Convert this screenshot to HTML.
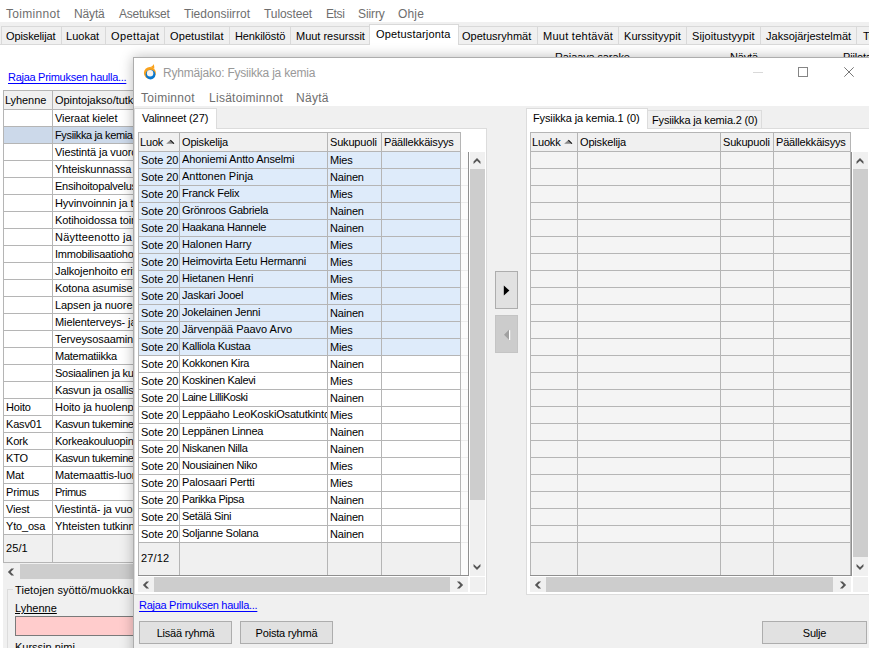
<!DOCTYPE html>
<html lang="fi"><head><meta charset="utf-8"><title>Ryhmäjako</title><style>
html,body{margin:0;padding:0;}
body{width:869px;height:648px;overflow:hidden;position:relative;background:#fff;font-family:"Liberation Sans",sans-serif;font-size:11px;color:#000;}
*{box-sizing:border-box;}
.a{position:absolute;white-space:nowrap;}
.t{position:absolute;white-space:nowrap;line-height:13px;height:13px;letter-spacing:-0.18px;}
.m{position:absolute;white-space:nowrap;font-size:12px;line-height:14px;color:#6e6e6e;letter-spacing:0.27px;}
.lnk{position:absolute;white-space:nowrap;color:#0000ff;text-decoration:underline;text-underline-offset:1.5px;font-size:11px;line-height:13px;letter-spacing:-0.28px;}
.btn{position:absolute;background:#e1e1e1;border:1px solid #adadad;text-align:center;font-size:11px;letter-spacing:-0.2px;}
</style></head><body>
<div class="m" style="left:6px;top:7px;letter-spacing:0.316px;">Toiminnot</div>
<div class="m" style="left:74px;top:7px;letter-spacing:-0.152px;">Näytä</div>
<div class="m" style="left:119px;top:7px;letter-spacing:-0.234px;">Asetukset</div>
<div class="m" style="left:184px;top:7px;letter-spacing:0.032px;">Tiedonsiirrot</div>
<div class="m" style="left:264px;top:7px;letter-spacing:-0.091px;">Tulosteet</div>
<div class="m" style="left:326px;top:7px;letter-spacing:-0.404px;">Etsi</div>
<div class="m" style="left:358px;top:7px;letter-spacing:-0.105px;">Siirry</div>
<div class="m" style="left:398px;top:7px;letter-spacing:0.16px;">Ohje</div>
<div class="a" style="left:0px;top:22px;width:869px;height:22px;background:#f0f0f0;"></div>
<div class="a" style="left:0px;top:44px;width:869px;height:1px;background:#d9d9d9;"></div>
<div class="a" style="left:1px;top:26px;width:61px;height:18px;border:1px solid #d9d9d9;border-bottom:none;"></div>
<div class="t" style="left:6px;top:30px;letter-spacing:-0.123px;">Opiskelijat</div>
<div class="a" style="left:61px;top:26px;width:45px;height:18px;border:1px solid #d9d9d9;border-bottom:none;border-left:none;"></div>
<div class="t" style="left:66px;top:30px;letter-spacing:0.011px;">Luokat</div>
<div class="a" style="left:105px;top:26px;width:60px;height:18px;border:1px solid #d9d9d9;border-bottom:none;border-left:none;"></div>
<div class="t" style="left:111px;top:30px;letter-spacing:0.44px;">Opettajat</div>
<div class="a" style="left:164px;top:26px;width:66px;height:18px;border:1px solid #d9d9d9;border-bottom:none;border-left:none;"></div>
<div class="t" style="left:170px;top:30px;letter-spacing:0.101px;">Opetustilat</div>
<div class="a" style="left:229px;top:26px;width:62px;height:18px;border:1px solid #d9d9d9;border-bottom:none;border-left:none;"></div>
<div class="t" style="left:235px;top:30px;letter-spacing:-0.116px;">Henkilöstö</div>
<div class="a" style="left:290px;top:26px;width:80px;height:18px;border:1px solid #d9d9d9;border-bottom:none;border-left:none;"></div>
<div class="t" style="left:296px;top:30px;letter-spacing:-0.013px;">Muut resurssit</div>
<div class="a" style="left:369px;top:24px;width:90px;height:21px;background:#fff;border:1px solid #d9d9d9;border-bottom:none;"></div>
<div class="t" style="left:376px;top:28px;letter-spacing:0.167px;">Opetustarjonta</div>
<div class="a" style="left:458px;top:26px;width:80px;height:18px;border:1px solid #d9d9d9;border-bottom:none;border-left:none;"></div>
<div class="t" style="left:462px;top:30px;letter-spacing:0.017px;">Opetusryhmät</div>
<div class="a" style="left:537px;top:26px;width:82px;height:18px;border:1px solid #d9d9d9;border-bottom:none;border-left:none;"></div>
<div class="t" style="left:543px;top:30px;letter-spacing:0.265px;">Muut tehtävät</div>
<div class="a" style="left:618px;top:26px;width:69px;height:18px;border:1px solid #d9d9d9;border-bottom:none;border-left:none;"></div>
<div class="t" style="left:624px;top:30px;letter-spacing:0.046px;">Kurssityypit</div>
<div class="a" style="left:686px;top:26px;width:75px;height:18px;border:1px solid #d9d9d9;border-bottom:none;border-left:none;"></div>
<div class="t" style="left:692px;top:30px;letter-spacing:0.104px;">Sijoitustyypit</div>
<div class="a" style="left:760px;top:26px;width:97px;height:18px;border:1px solid #d9d9d9;border-bottom:none;border-left:none;"></div>
<div class="t" style="left:766px;top:30px;letter-spacing:0.007px;">Jaksojärjestelmät</div>
<div class="a" style="left:856px;top:26px;width:45px;height:18px;border:1px solid #d9d9d9;border-bottom:none;border-left:none;"></div>
<div class="t" style="left:863px;top:30px;letter-spacing:-0.819px;">Tu</div>
<div class="t" style="left:555px;top:51px;letter-spacing:-0.117px;">Rajaava sarake</div>
<div class="t" style="left:730px;top:51px;">Näytä</div>
<div class="t" style="left:843px;top:51px;">Piilota</div>
<div class="lnk" style="left:8px;top:71px;">Rajaa Primuksen haulla...</div>
<div class="a" style="left:3px;top:90px;width:400px;height:473px;background:#fff;border:1px solid #b5b5b5;"></div>
<div class="a" style="left:4px;top:91px;width:400px;height:18px;background:#f0f0f0;"></div>
<div class="a" style="left:3px;top:109px;width:400px;height:1px;background:#b5b5b5;"></div>
<div class="t" style="left:5px;top:94px;letter-spacing:-0.087px;">Lyhenne</div>
<div class="t" style="left:55px;top:94px;letter-spacing:-0.04px;">Opintojakso/tutkinnon osa</div>
<div class="a" style="left:3px;top:126px;width:400px;height:1px;background:#b5b5b5;"></div>
<div class="t" style="left:55px;top:112px;letter-spacing:-0.071px;">Vieraat kielet</div>
<div class="a" style="left:4px;top:127px;width:400px;height:16px;background:#ccd9ea;"></div>
<div class="a" style="left:3px;top:143px;width:400px;height:1px;background:#b5b5b5;"></div>
<div class="t" style="left:55px;top:129px;letter-spacing:-0.362px;">Fysiikka ja kemia</div>
<div class="a" style="left:3px;top:160px;width:400px;height:1px;background:#b5b5b5;"></div>
<div class="t" style="left:55px;top:146px;letter-spacing:-0.1px;">Viestintä ja vuorovaikutus</div>
<div class="a" style="left:3px;top:177px;width:400px;height:1px;background:#b5b5b5;"></div>
<div class="t" style="left:55px;top:163px;letter-spacing:-0.1px;">Yhteiskunnassa ja</div>
<div class="a" style="left:3px;top:194px;width:400px;height:1px;background:#b5b5b5;"></div>
<div class="t" style="left:55px;top:180px;letter-spacing:-0.22px;">Ensihoitopalvelussa</div>
<div class="a" style="left:3px;top:211px;width:400px;height:1px;background:#b5b5b5;"></div>
<div class="t" style="left:55px;top:197px;letter-spacing:-0.1px;">Hyvinvoinnin ja toimintakyvyn</div>
<div class="a" style="left:3px;top:228px;width:400px;height:1px;background:#b5b5b5;"></div>
<div class="t" style="left:55px;top:214px;letter-spacing:-0.1px;">Kotihoidossa toimiminen</div>
<div class="a" style="left:3px;top:245px;width:400px;height:1px;background:#b5b5b5;"></div>
<div class="t" style="left:55px;top:231px;letter-spacing:0.2px;">Näytteenotto ja</div>
<div class="a" style="left:3px;top:262px;width:400px;height:1px;background:#b5b5b5;"></div>
<div class="t" style="left:55px;top:248px;letter-spacing:-0.247px;">Immobilisaatiohoidon</div>
<div class="a" style="left:3px;top:279px;width:400px;height:1px;background:#b5b5b5;"></div>
<div class="t" style="left:55px;top:265px;letter-spacing:-0.112px;">Jalkojenhoito erityisryhmille</div>
<div class="a" style="left:3px;top:296px;width:400px;height:1px;background:#b5b5b5;"></div>
<div class="t" style="left:55px;top:282px;letter-spacing:-0.1px;">Kotona asumisen tukeminen</div>
<div class="a" style="left:3px;top:313px;width:400px;height:1px;background:#b5b5b5;"></div>
<div class="t" style="left:55px;top:299px;letter-spacing:-0.1px;">Lapsen ja nuoren hoidon</div>
<div class="a" style="left:3px;top:330px;width:400px;height:1px;background:#b5b5b5;"></div>
<div class="t" style="left:55px;top:316px;letter-spacing:-0.1px;">Mielenterveys- ja päihdetyö</div>
<div class="a" style="left:3px;top:347px;width:400px;height:1px;background:#b5b5b5;"></div>
<div class="t" style="left:55px;top:333px;letter-spacing:-0.099px;">Terveysosaaminen</div>
<div class="a" style="left:3px;top:364px;width:400px;height:1px;background:#b5b5b5;"></div>
<div class="t" style="left:55px;top:350px;letter-spacing:-0.241px;">Matematiikka</div>
<div class="a" style="left:3px;top:381px;width:400px;height:1px;background:#b5b5b5;"></div>
<div class="t" style="left:55px;top:367px;letter-spacing:-0.269px;">Sosiaalinen ja kulttuurinen</div>
<div class="a" style="left:3px;top:398px;width:400px;height:1px;background:#b5b5b5;"></div>
<div class="t" style="left:55px;top:384px;letter-spacing:-0.196px;">Kasvun ja osallisuuden</div>
<div class="a" style="left:3px;top:415px;width:400px;height:1px;background:#b5b5b5;"></div>
<div class="t" style="left:6px;top:401px;">Hoito</div>
<div class="t" style="left:55px;top:401px;letter-spacing:-0.057px;">Hoito ja huolenpito</div>
<div class="a" style="left:3px;top:432px;width:400px;height:1px;background:#b5b5b5;"></div>
<div class="t" style="left:6px;top:418px;">Kasv01</div>
<div class="t" style="left:55px;top:418px;letter-spacing:-0.386px;">Kasvun tukeminen</div>
<div class="a" style="left:3px;top:449px;width:400px;height:1px;background:#b5b5b5;"></div>
<div class="t" style="left:6px;top:435px;">Kork</div>
<div class="t" style="left:55px;top:435px;letter-spacing:-0.224px;">Korkeakouluopinnot</div>
<div class="a" style="left:3px;top:466px;width:400px;height:1px;background:#b5b5b5;"></div>
<div class="t" style="left:6px;top:452px;">KTO</div>
<div class="t" style="left:55px;top:452px;letter-spacing:-0.386px;">Kasvun tukeminen ja</div>
<div class="a" style="left:3px;top:483px;width:400px;height:1px;background:#b5b5b5;"></div>
<div class="t" style="left:6px;top:469px;">Mat</div>
<div class="t" style="left:55px;top:469px;letter-spacing:-0.1px;">Matemaattis-luonnontieteellinen</div>
<div class="a" style="left:3px;top:500px;width:400px;height:1px;background:#b5b5b5;"></div>
<div class="t" style="left:6px;top:486px;">Primus</div>
<div class="t" style="left:55px;top:486px;letter-spacing:-0.522px;">Primus</div>
<div class="a" style="left:3px;top:517px;width:400px;height:1px;background:#b5b5b5;"></div>
<div class="t" style="left:6px;top:503px;">Viest</div>
<div class="t" style="left:55px;top:503px;letter-spacing:-0.028px;">Viestintä- ja vuorovaikutus</div>
<div class="a" style="left:3px;top:534px;width:400px;height:1px;background:#b5b5b5;"></div>
<div class="t" style="left:6px;top:520px;">Yto_osa</div>
<div class="t" style="left:55px;top:520px;letter-spacing:-0.1px;">Yhteisten tutkinnon osien</div>
<div class="a" style="left:4px;top:535px;width:400px;height:27px;background:#f0f0f0;"></div>
<div class="t" style="left:6px;top:542px;letter-spacing:0.095px;">25/1</div>
<div class="a" style="left:52px;top:90px;width:1px;height:473px;background:#b5b5b5;"></div>
<div class="a" style="left:3px;top:563px;width:400px;height:17px;background:#f0f0f0;"></div>
<div class="a" style="left:20px;top:564px;width:400px;height:15px;background:#cdcdcd;"></div>
<svg class="a" style="left:6px;top:566.5px" width="10" height="10" viewBox="0 0 10 10"><polygon points="1.90,5.00 5.40,8.45 8.10,8.45 4.70,5.00 8.10,1.55 5.40,1.55" fill="#565656"/></svg>
<div class="a" style="left:3px;top:580px;width:400px;height:70px;background:#f0f0f0;"></div>
<div class="a" style="left:7px;top:589px;width:400px;height:70px;border:1px solid #dcdcdc;"></div>
<div class="t" style="left:13px;top:584px;background:#f0f0f0;padding:0 2px;letter-spacing:0.07px;">Tietojen syöttö/muokkaus</div>
<div class="t" style="left:15px;top:602px;text-decoration:underline;letter-spacing:0;">Lyhenne</div>
<div class="a" style="left:15px;top:616px;width:400px;height:20px;background:#ffcccc;border:1px solid #7a7a7a;"></div>
<div class="t" style="left:15px;top:641px;letter-spacing:0;">Kurssin nimi</div>
<div class="a" style="left:133px;top:57px;width:760px;height:620px;background:#f0f0f0;border:1px solid #adadad;box-shadow:0 0 12px 0 rgba(0,0,0,0.27);"></div>
<div class="a" style="left:134px;top:58px;width:758px;height:48px;background:#fff;"></div>
<svg class="a" style="left:143px;top:63px" width="15" height="18" viewBox="0 0 15 18"><circle cx="6.9" cy="9.9" r="6" fill="#f9a11b"/><path d="M6.8 4 C8.8 3.7 10 2.7 10.7 1 C11.2 2.4 11.4 3.8 11.3 5.6 Z" fill="#f9a11b"/><circle cx="7.5" cy="11.6" r="4.9" fill="#0a78d0"/><circle cx="7.1" cy="10.2" r="3.2" fill="#f8f4ee"/></svg>
<div class="m" style="left:163px;top:66px;color:#999;letter-spacing:-0.21px;">Ryhmäjako: Fysiikka ja kemia</div>
<div class="a" style="left:753px;top:72px;width:10px;height:1px;background:#d9d9d9;"></div>
<div class="a" style="left:798px;top:67px;width:10px;height:10px;border:1px solid #858585;"></div>
<svg class="a" style="left:844px;top:67px" width="10" height="10" viewBox="0 0 10 10"><path d="M0.3 0.3 L9.7 9.7 M9.7 0.3 L0.3 9.7" stroke="#777" stroke-width="1" fill="none"/></svg>
<div class="m" style="left:141px;top:91px;">Toiminnot</div>
<div class="m" style="left:209px;top:91px;">Lisätoiminnot</div>
<div class="m" style="left:296px;top:91px;">Näytä</div>
<div class="a" style="left:134px;top:128px;width:353px;height:467px;background:#fff;border:1px solid #dcdcdc;"></div>
<div class="a" style="left:134px;top:108px;width:83px;height:21px;background:#fff;border:1px solid #dcdcdc;border-bottom:none;"></div>
<div class="t" style="left:142px;top:112px;letter-spacing:-0.105px;">Valinneet (27)</div>
<div class="a" style="left:138px;top:132px;width:323px;height:20px;background:#f0f0f0;border:1px solid #b5b5b5;"></div>
<div class="a" style="left:138px;top:152px;width:323px;height:391px;background:#fff;border-left:1px solid #b5b5b5;border-right:1px solid #b5b5b5;"></div>
<div class="a" style="left:139px;top:152px;width:321px;height:203px;background:#deebfa;"></div>
<div class="a" style="left:138px;top:543px;width:323px;height:32px;background:#f0f0f0;border-left:1px solid #b5b5b5;border-right:1px solid #b5b5b5;"></div>
<div class="a" style="left:138px;top:168px;width:323px;height:1px;background:#b5b5b5;"></div>
<div class="a" style="left:138px;top:185px;width:323px;height:1px;background:#b5b5b5;"></div>
<div class="a" style="left:138px;top:202px;width:323px;height:1px;background:#b5b5b5;"></div>
<div class="a" style="left:138px;top:219px;width:323px;height:1px;background:#b5b5b5;"></div>
<div class="a" style="left:138px;top:236px;width:323px;height:1px;background:#b5b5b5;"></div>
<div class="a" style="left:138px;top:253px;width:323px;height:1px;background:#b5b5b5;"></div>
<div class="a" style="left:138px;top:270px;width:323px;height:1px;background:#b5b5b5;"></div>
<div class="a" style="left:138px;top:287px;width:323px;height:1px;background:#b5b5b5;"></div>
<div class="a" style="left:138px;top:304px;width:323px;height:1px;background:#b5b5b5;"></div>
<div class="a" style="left:138px;top:321px;width:323px;height:1px;background:#b5b5b5;"></div>
<div class="a" style="left:138px;top:338px;width:323px;height:1px;background:#b5b5b5;"></div>
<div class="a" style="left:138px;top:355px;width:323px;height:1px;background:#b5b5b5;"></div>
<div class="a" style="left:138px;top:372px;width:323px;height:1px;background:#b5b5b5;"></div>
<div class="a" style="left:138px;top:389px;width:323px;height:1px;background:#b5b5b5;"></div>
<div class="a" style="left:138px;top:406px;width:323px;height:1px;background:#b5b5b5;"></div>
<div class="a" style="left:138px;top:423px;width:323px;height:1px;background:#b5b5b5;"></div>
<div class="a" style="left:138px;top:440px;width:323px;height:1px;background:#b5b5b5;"></div>
<div class="a" style="left:138px;top:457px;width:323px;height:1px;background:#b5b5b5;"></div>
<div class="a" style="left:138px;top:474px;width:323px;height:1px;background:#b5b5b5;"></div>
<div class="a" style="left:138px;top:491px;width:323px;height:1px;background:#b5b5b5;"></div>
<div class="a" style="left:138px;top:508px;width:323px;height:1px;background:#b5b5b5;"></div>
<div class="a" style="left:138px;top:525px;width:323px;height:1px;background:#b5b5b5;"></div>
<div class="a" style="left:138px;top:542px;width:323px;height:1px;background:#b5b5b5;"></div>
<div class="a" style="left:179px;top:132px;width:1px;height:443px;background:#b5b5b5;"></div>
<div class="a" style="left:327px;top:132px;width:1px;height:443px;background:#b5b5b5;"></div>
<div class="a" style="left:381px;top:132px;width:1px;height:443px;background:#b5b5b5;"></div>
<div class="a" style="left:460px;top:132px;width:1px;height:443px;background:#b5b5b5;"></div>
<div class="a" style="left:461px;top:152px;width:7px;height:423px;background:#fcfcfc;"></div>
<div class="a" style="left:461px;top:168px;width:7px;height:1px;background:#ececec;"></div>
<div class="a" style="left:461px;top:185px;width:7px;height:1px;background:#ececec;"></div>
<div class="a" style="left:461px;top:202px;width:7px;height:1px;background:#ececec;"></div>
<div class="a" style="left:461px;top:219px;width:7px;height:1px;background:#ececec;"></div>
<div class="a" style="left:461px;top:236px;width:7px;height:1px;background:#ececec;"></div>
<div class="a" style="left:461px;top:253px;width:7px;height:1px;background:#ececec;"></div>
<div class="a" style="left:461px;top:270px;width:7px;height:1px;background:#ececec;"></div>
<div class="a" style="left:461px;top:287px;width:7px;height:1px;background:#ececec;"></div>
<div class="a" style="left:461px;top:304px;width:7px;height:1px;background:#ececec;"></div>
<div class="a" style="left:461px;top:321px;width:7px;height:1px;background:#ececec;"></div>
<div class="a" style="left:461px;top:338px;width:7px;height:1px;background:#ececec;"></div>
<div class="a" style="left:461px;top:355px;width:7px;height:1px;background:#ececec;"></div>
<div class="a" style="left:461px;top:372px;width:7px;height:1px;background:#ececec;"></div>
<div class="a" style="left:461px;top:389px;width:7px;height:1px;background:#ececec;"></div>
<div class="a" style="left:461px;top:406px;width:7px;height:1px;background:#ececec;"></div>
<div class="a" style="left:461px;top:423px;width:7px;height:1px;background:#ececec;"></div>
<div class="a" style="left:461px;top:440px;width:7px;height:1px;background:#ececec;"></div>
<div class="a" style="left:461px;top:457px;width:7px;height:1px;background:#ececec;"></div>
<div class="a" style="left:461px;top:474px;width:7px;height:1px;background:#ececec;"></div>
<div class="a" style="left:461px;top:491px;width:7px;height:1px;background:#ececec;"></div>
<div class="a" style="left:461px;top:508px;width:7px;height:1px;background:#ececec;"></div>
<div class="a" style="left:461px;top:525px;width:7px;height:1px;background:#ececec;"></div>
<div class="a" style="left:461px;top:542px;width:7px;height:1px;background:#ececec;"></div>
<div class="a" style="left:138px;top:575px;width:331px;height:1px;background:#8f8f8f;"></div>
<div class="a" style="left:468px;top:152px;width:1px;height:424px;background:#8f8f8f;"></div>
<div class="a" style="left:469px;top:152px;width:17px;height:442px;background:#fff;"></div>
<div class="a" style="left:470px;top:152px;width:15px;height:424px;background:#f0f0f0;"></div>
<div class="a" style="left:470px;top:169px;width:15px;height:331px;background:#cdcdcd;"></div>
<svg class="a" style="left:472.2px;top:156px" width="10" height="10" viewBox="0 0 10 10"><polygon points="5.00,1.90 8.45,5.40 8.45,8.10 5.00,4.70 1.55,8.10 1.55,5.40" fill="#565656"/></svg>
<svg class="a" style="left:472.2px;top:562px" width="10" height="10" viewBox="0 0 10 10"><polygon points="5.00,8.10 8.45,4.60 8.45,1.90 5.00,5.30 1.55,1.90 1.55,4.60" fill="#565656"/></svg>
<div class="a" style="left:138px;top:576px;width:331px;height:18px;background:#fff;"></div>
<div class="a" style="left:138px;top:577px;width:330px;height:15px;background:#f0f0f0;"></div>
<div class="a" style="left:154px;top:577px;width:296px;height:15px;background:#cdcdcd;"></div>
<svg class="a" style="left:141px;top:579.5px" width="10" height="10" viewBox="0 0 10 10"><polygon points="1.90,5.00 5.40,8.45 8.10,8.45 4.70,5.00 8.10,1.55 5.40,1.55" fill="#565656"/></svg>
<svg class="a" style="left:455px;top:579.5px" width="10" height="10" viewBox="0 0 10 10"><polygon points="8.10,5.00 4.60,8.45 1.90,8.45 5.30,5.00 1.90,1.55 4.60,1.55" fill="#565656"/></svg>
<div class="a" style="left:470px;top:577px;width:15px;height:15px;background:#f0f0f0;"></div>
<div class="t" style="left:140px;top:136px;">Luok</div>
<svg class="a" style="left:166px;top:138px" width="11" height="7" viewBox="0 0 11 7"><path d="M0.2 5.8 L4.3 1.9 L8.3 5.8Z" fill="#868686"/><path d="M5.1 1.7 L8.9 5.3" stroke="#fff" stroke-width="0.9" fill="none"/><path d="M4.4 2.1 L8 5.6" stroke="#111" stroke-width="1.1" fill="none"/></svg>
<div class="t" style="left:182px;top:136px;">Opiskelija</div>
<div class="t" style="left:330px;top:136px;">Sukupuoli</div>
<div class="t" style="left:384px;top:136px;">Päällekkäisyys</div>
<div class="t" style="left:141px;top:154px;letter-spacing:-0.089px;">Sote 20</div>
<div class="t" style="left:182px;top:153px;width:145px;overflow:hidden;letter-spacing:-0.144px;">Ahoniemi Antto Anselmi</div>
<div class="t" style="left:330px;top:154px;">Mies</div>
<div class="t" style="left:141px;top:171px;letter-spacing:-0.089px;">Sote 20</div>
<div class="t" style="left:182px;top:170px;width:145px;overflow:hidden;letter-spacing:-0.026px;">Anttonen Pinja</div>
<div class="t" style="left:330px;top:171px;">Nainen</div>
<div class="t" style="left:141px;top:188px;letter-spacing:-0.089px;">Sote 20</div>
<div class="t" style="left:182px;top:187px;width:145px;overflow:hidden;letter-spacing:-0.217px;">Franck Felix</div>
<div class="t" style="left:330px;top:188px;">Mies</div>
<div class="t" style="left:141px;top:205px;letter-spacing:-0.089px;">Sote 20</div>
<div class="t" style="left:182px;top:204px;width:145px;overflow:hidden;letter-spacing:-0.253px;">Grönroos Gabriela</div>
<div class="t" style="left:330px;top:205px;">Nainen</div>
<div class="t" style="left:141px;top:222px;letter-spacing:-0.089px;">Sote 20</div>
<div class="t" style="left:182px;top:221px;width:145px;overflow:hidden;letter-spacing:-0.259px;">Haakana Hannele</div>
<div class="t" style="left:330px;top:222px;">Nainen</div>
<div class="t" style="left:141px;top:239px;letter-spacing:-0.089px;">Sote 20</div>
<div class="t" style="left:182px;top:238px;width:145px;overflow:hidden;letter-spacing:-0.121px;">Halonen Harry</div>
<div class="t" style="left:330px;top:239px;">Mies</div>
<div class="t" style="left:141px;top:256px;letter-spacing:-0.089px;">Sote 20</div>
<div class="t" style="left:182px;top:255px;width:145px;overflow:hidden;letter-spacing:-0.208px;">Heimovirta Eetu Hermanni</div>
<div class="t" style="left:330px;top:256px;">Mies</div>
<div class="t" style="left:141px;top:273px;letter-spacing:-0.089px;">Sote 20</div>
<div class="t" style="left:182px;top:272px;width:145px;overflow:hidden;letter-spacing:-0.155px;">Hietanen Henri</div>
<div class="t" style="left:330px;top:273px;">Mies</div>
<div class="t" style="left:141px;top:290px;letter-spacing:-0.089px;">Sote 20</div>
<div class="t" style="left:182px;top:289px;width:145px;overflow:hidden;letter-spacing:-0.231px;">Jaskari Jooel</div>
<div class="t" style="left:330px;top:290px;">Mies</div>
<div class="t" style="left:141px;top:307px;letter-spacing:-0.089px;">Sote 20</div>
<div class="t" style="left:182px;top:306px;width:145px;overflow:hidden;letter-spacing:-0.241px;">Jokelainen Jenni</div>
<div class="t" style="left:330px;top:307px;">Nainen</div>
<div class="t" style="left:141px;top:324px;letter-spacing:-0.089px;">Sote 20</div>
<div class="t" style="left:182px;top:323px;width:145px;overflow:hidden;letter-spacing:-0.029px;">Järvenpää Paavo Arvo</div>
<div class="t" style="left:330px;top:324px;">Mies</div>
<div class="t" style="left:141px;top:341px;letter-spacing:-0.089px;">Sote 20</div>
<div class="t" style="left:182px;top:340px;width:145px;overflow:hidden;letter-spacing:-0.305px;">Kalliola Kustaa</div>
<div class="t" style="left:330px;top:341px;">Mies</div>
<div class="t" style="left:141px;top:358px;letter-spacing:-0.089px;">Sote 20</div>
<div class="t" style="left:182px;top:357px;width:145px;overflow:hidden;letter-spacing:-0.35px;">Kokkonen Kira</div>
<div class="t" style="left:330px;top:358px;">Nainen</div>
<div class="t" style="left:141px;top:375px;letter-spacing:-0.089px;">Sote 20</div>
<div class="t" style="left:182px;top:374px;width:145px;overflow:hidden;letter-spacing:-0.319px;">Koskinen Kalevi</div>
<div class="t" style="left:330px;top:375px;">Mies</div>
<div class="t" style="left:141px;top:392px;letter-spacing:-0.089px;">Sote 20</div>
<div class="t" style="left:182px;top:391px;width:145px;overflow:hidden;letter-spacing:-0.448px;">Laine LilliKoski</div>
<div class="t" style="left:330px;top:392px;">Nainen</div>
<div class="t" style="left:141px;top:409px;letter-spacing:-0.089px;">Sote 20</div>
<div class="t" style="left:182px;top:408px;width:145px;overflow:hidden;letter-spacing:-0.18px;">Leppäaho LeoKoskiOsatutkinto</div>
<div class="t" style="left:330px;top:409px;">Mies</div>
<div class="t" style="left:141px;top:426px;letter-spacing:-0.089px;">Sote 20</div>
<div class="t" style="left:182px;top:425px;width:145px;overflow:hidden;letter-spacing:-0.255px;">Leppänen Linnea</div>
<div class="t" style="left:330px;top:426px;">Nainen</div>
<div class="t" style="left:141px;top:443px;letter-spacing:-0.089px;">Sote 20</div>
<div class="t" style="left:182px;top:442px;width:145px;overflow:hidden;letter-spacing:-0.351px;">Niskanen Nilla</div>
<div class="t" style="left:330px;top:443px;">Nainen</div>
<div class="t" style="left:141px;top:460px;letter-spacing:-0.089px;">Sote 20</div>
<div class="t" style="left:182px;top:459px;width:145px;overflow:hidden;letter-spacing:-0.334px;">Nousiainen Niko</div>
<div class="t" style="left:330px;top:460px;">Mies</div>
<div class="t" style="left:141px;top:477px;letter-spacing:-0.089px;">Sote 20</div>
<div class="t" style="left:182px;top:476px;width:145px;overflow:hidden;letter-spacing:-0.125px;">Palosaari Pertti</div>
<div class="t" style="left:330px;top:477px;">Mies</div>
<div class="t" style="left:141px;top:494px;letter-spacing:-0.089px;">Sote 20</div>
<div class="t" style="left:182px;top:493px;width:145px;overflow:hidden;letter-spacing:-0.413px;">Parikka Pipsa</div>
<div class="t" style="left:330px;top:494px;">Nainen</div>
<div class="t" style="left:141px;top:511px;letter-spacing:-0.089px;">Sote 20</div>
<div class="t" style="left:182px;top:510px;width:145px;overflow:hidden;letter-spacing:-0.309px;">Setälä Sini</div>
<div class="t" style="left:330px;top:511px;">Nainen</div>
<div class="t" style="left:141px;top:528px;letter-spacing:-0.089px;">Sote 20</div>
<div class="t" style="left:182px;top:527px;width:145px;overflow:hidden;letter-spacing:-0.255px;">Soljanne Solana</div>
<div class="t" style="left:330px;top:528px;">Nainen</div>
<div class="t" style="left:141px;top:552px;letter-spacing:0.154px;">27/12</div>
<div class="lnk" style="left:139px;top:599px;">Rajaa Primuksen haulla...</div>
<div class="btn" style="left:139px;top:621px;width:93px;height:23px;line-height:22px;">Lisää ryhmä</div>
<div class="btn" style="left:240px;top:621px;width:93px;height:23px;line-height:22px;">Poista ryhmä</div>
<div class="btn" style="left:762px;top:621px;width:105px;height:23px;line-height:22px;">Sulje</div>
<div class="a" style="left:495px;top:271px;width:23px;height:38px;background:#e1e1e1;border:1px solid #adadad;"></div>
<svg class="a" style="left:503px;top:285px" width="7" height="11" viewBox="0 0 7 11"><path d="M0.8 0.5 L6.4 5.5 L0.8 10.5Z" fill="#000"/></svg>
<div class="a" style="left:495px;top:315px;width:23px;height:38px;background:#cccccc;border:1px solid #c4c4c4;"></div>
<svg class="a" style="left:503px;top:329px" width="8" height="12" viewBox="0 0 8 12"><path d="M6 0.8 L6 10.8 L1 5.8Z" fill="#a0a0a0"/><rect x="6" y="1.2" width="1.2" height="9.8" fill="#fff"/></svg>
<div class="a" style="left:526px;top:128px;width:400px;height:467px;background:#fff;border:1px solid #dcdcdc;"></div>
<div class="a" style="left:647px;top:110px;width:115px;height:19px;background:#f0f0f0;border:1px solid #dcdcdc;border-left:none;"></div>
<div class="a" style="left:526px;top:108px;width:122px;height:21px;background:#fff;border:1px solid #dcdcdc;border-bottom:none;"></div>
<div class="t" style="left:533px;top:112px;letter-spacing:-0.127px;">Fysiikka ja kemia.1 (0)</div>
<div class="t" style="left:652px;top:114px;letter-spacing:-0.171px;">Fysiikka ja kemia.2 (0)</div>
<div class="a" style="left:530px;top:132px;width:321px;height:20px;background:#f0f0f0;border:1px solid #b5b5b5;"></div>
<div class="a" style="left:530px;top:152px;width:321px;height:391px;background:#f4f4f4;border-left:1px solid #b5b5b5;border-right:1px solid #b5b5b5;"></div>
<div class="a" style="left:530px;top:543px;width:321px;height:32px;background:#f0f0f0;border-left:1px solid #b5b5b5;border-right:1px solid #b5b5b5;"></div>
<div class="a" style="left:530px;top:168px;width:321px;height:1px;background:#b5b5b5;"></div>
<div class="a" style="left:530px;top:185px;width:321px;height:1px;background:#b5b5b5;"></div>
<div class="a" style="left:530px;top:202px;width:321px;height:1px;background:#b5b5b5;"></div>
<div class="a" style="left:530px;top:219px;width:321px;height:1px;background:#b5b5b5;"></div>
<div class="a" style="left:530px;top:236px;width:321px;height:1px;background:#b5b5b5;"></div>
<div class="a" style="left:530px;top:253px;width:321px;height:1px;background:#b5b5b5;"></div>
<div class="a" style="left:530px;top:270px;width:321px;height:1px;background:#b5b5b5;"></div>
<div class="a" style="left:530px;top:287px;width:321px;height:1px;background:#b5b5b5;"></div>
<div class="a" style="left:530px;top:304px;width:321px;height:1px;background:#b5b5b5;"></div>
<div class="a" style="left:530px;top:321px;width:321px;height:1px;background:#b5b5b5;"></div>
<div class="a" style="left:530px;top:338px;width:321px;height:1px;background:#b5b5b5;"></div>
<div class="a" style="left:530px;top:355px;width:321px;height:1px;background:#b5b5b5;"></div>
<div class="a" style="left:530px;top:372px;width:321px;height:1px;background:#b5b5b5;"></div>
<div class="a" style="left:530px;top:389px;width:321px;height:1px;background:#b5b5b5;"></div>
<div class="a" style="left:530px;top:406px;width:321px;height:1px;background:#b5b5b5;"></div>
<div class="a" style="left:530px;top:423px;width:321px;height:1px;background:#b5b5b5;"></div>
<div class="a" style="left:530px;top:440px;width:321px;height:1px;background:#b5b5b5;"></div>
<div class="a" style="left:530px;top:457px;width:321px;height:1px;background:#b5b5b5;"></div>
<div class="a" style="left:530px;top:474px;width:321px;height:1px;background:#b5b5b5;"></div>
<div class="a" style="left:530px;top:491px;width:321px;height:1px;background:#b5b5b5;"></div>
<div class="a" style="left:530px;top:508px;width:321px;height:1px;background:#b5b5b5;"></div>
<div class="a" style="left:530px;top:525px;width:321px;height:1px;background:#b5b5b5;"></div>
<div class="a" style="left:530px;top:542px;width:321px;height:1px;background:#b5b5b5;"></div>
<div class="a" style="left:577px;top:132px;width:1px;height:443px;background:#b5b5b5;"></div>
<div class="a" style="left:720px;top:132px;width:1px;height:443px;background:#b5b5b5;"></div>
<div class="a" style="left:773px;top:132px;width:1px;height:443px;background:#b5b5b5;"></div>
<div class="a" style="left:850px;top:132px;width:1px;height:443px;background:#b5b5b5;"></div>
<div class="a" style="left:530px;top:575px;width:322px;height:1px;background:#8f8f8f;"></div>
<div class="a" style="left:851px;top:152px;width:1px;height:424px;background:#8f8f8f;"></div>
<div class="a" style="left:852px;top:152px;width:17px;height:442px;background:#fff;"></div>
<div class="a" style="left:853px;top:152px;width:15px;height:424px;background:#f0f0f0;"></div>
<div class="a" style="left:853px;top:169px;width:15px;height:388px;background:#cdcdcd;"></div>
<svg class="a" style="left:855.2px;top:156px" width="10" height="10" viewBox="0 0 10 10"><polygon points="5.00,1.90 8.45,5.40 8.45,8.10 5.00,4.70 1.55,8.10 1.55,5.40" fill="#565656"/></svg>
<svg class="a" style="left:855.2px;top:562px" width="10" height="10" viewBox="0 0 10 10"><polygon points="5.00,8.10 8.45,4.60 8.45,1.90 5.00,5.30 1.55,1.90 1.55,4.60" fill="#565656"/></svg>
<div class="a" style="left:530px;top:576px;width:322px;height:18px;background:#fff;"></div>
<div class="a" style="left:530px;top:577px;width:321px;height:15px;background:#f0f0f0;"></div>
<div class="a" style="left:546px;top:577px;width:287px;height:15px;background:#cdcdcd;"></div>
<svg class="a" style="left:533px;top:579.5px" width="10" height="10" viewBox="0 0 10 10"><polygon points="1.90,5.00 5.40,8.45 8.10,8.45 4.70,5.00 8.10,1.55 5.40,1.55" fill="#565656"/></svg>
<svg class="a" style="left:838px;top:579.5px" width="10" height="10" viewBox="0 0 10 10"><polygon points="8.10,5.00 4.60,8.45 1.90,8.45 5.30,5.00 1.90,1.55 4.60,1.55" fill="#565656"/></svg>
<div class="a" style="left:853px;top:577px;width:15px;height:15px;background:#f0f0f0;"></div>
<div class="t" style="left:532px;top:136px;">Luokk</div>
<svg class="a" style="left:564px;top:138px" width="11" height="7" viewBox="0 0 11 7"><path d="M0.2 5.8 L4.3 1.9 L8.3 5.8Z" fill="#868686"/><path d="M5.1 1.7 L8.9 5.3" stroke="#fff" stroke-width="0.9" fill="none"/><path d="M4.4 2.1 L8 5.6" stroke="#111" stroke-width="1.1" fill="none"/></svg>
<div class="t" style="left:580px;top:136px;">Opiskelija</div>
<div class="t" style="left:723px;top:136px;">Sukupuoli</div>
<div class="t" style="left:776px;top:136px;">Päällekkäisyys</div>
</body></html>
